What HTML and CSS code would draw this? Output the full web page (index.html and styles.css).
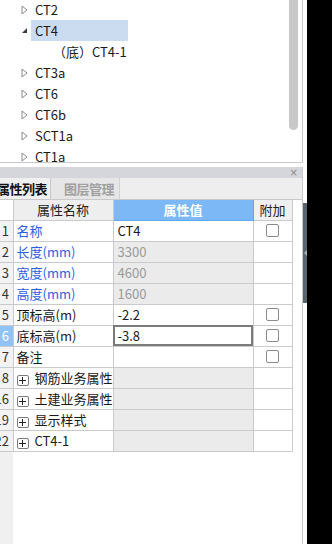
FILE: index.html
```html
<!DOCTYPE html>
<html lang="zh">
<head>
    <meta charset="UTF-8">
    <title>属性列表</title>
    <link rel="stylesheet" href="styles.css">
</head>
<body>
<div class="app">
    <div class="main">
        <div class="tree-panel">
            <div class="tree">
                <div class="node"><span class="twisty"><svg width="7" height="10" viewBox="0 0 7 10"><path d="M1 1 L6 5 L1 9 Z" fill="none" stroke="#8a8a8a" stroke-width="1"/></svg></span><span class="label">CT2</span></div>
                <div class="node selected"><span class="twisty"><svg width="7" height="10" viewBox="0 0 7 10"><path d="M6 2 L6 7 L1 7 Z" fill="#3c3c3c"/></svg></span><span class="label">CT4</span></div>
                <div class="node child"><span class="label">（底）CT4-1</span></div>
                <div class="node"><span class="twisty"><svg width="7" height="10" viewBox="0 0 7 10"><path d="M1 1 L6 5 L1 9 Z" fill="none" stroke="#8a8a8a" stroke-width="1"/></svg></span><span class="label">CT3a</span></div>
                <div class="node"><span class="twisty"><svg width="7" height="10" viewBox="0 0 7 10"><path d="M1 1 L6 5 L1 9 Z" fill="none" stroke="#8a8a8a" stroke-width="1"/></svg></span><span class="label">CT6</span></div>
                <div class="node"><span class="twisty"><svg width="7" height="10" viewBox="0 0 7 10"><path d="M1 1 L6 5 L1 9 Z" fill="none" stroke="#8a8a8a" stroke-width="1"/></svg></span><span class="label">CT6b</span></div>
                <div class="node"><span class="twisty"><svg width="7" height="10" viewBox="0 0 7 10"><path d="M1 1 L6 5 L1 9 Z" fill="none" stroke="#8a8a8a" stroke-width="1"/></svg></span><span class="label">SCT1a</span></div>
                <div class="node"><span class="twisty"><svg width="7" height="10" viewBox="0 0 7 10"><path d="M1 1 L6 5 L1 9 Z" fill="none" stroke="#8a8a8a" stroke-width="1"/></svg></span><span class="label">CT1a</span></div>
            </div>
            <div class="vscroll"><div class="thumb"></div></div>
        </div>

        <div class="props-panel">
            <div class="panel-title"><span class="close">×</span></div>
            <div class="tabs">
                <div class="tab active">属性列表</div>
                <div class="tab">图层管理</div>
            </div>
            <div class="grid-wrap">
                <table class="prop-table">
                    <colgroup>
                        <col class="c-num">
                        <col class="c-name">
                        <col class="c-value">
                        <col class="c-add">
                    </colgroup>
                    <tr class="head">
                        <th class="num"></th>
                        <th class="name-head">属性名称</th>
                        <th class="value-head">属性值</th>
                        <th class="add-head">附加</th>
                    </tr>
                    <tr>
                        <td class="num"><div class="num-in">1</div></td>
                        <td class="name blue">名称</td>
                        <td class="value">CT4</td>
                        <td class="add"><span class="check"></span></td>
                    </tr>
                    <tr>
                        <td class="num"><div class="num-in">2</div></td>
                        <td class="name blue">长度(mm)</td>
                        <td class="value readonly">3300</td>
                        <td class="add"></td>
                    </tr>
                    <tr>
                        <td class="num"><div class="num-in">3</div></td>
                        <td class="name blue">宽度(mm)</td>
                        <td class="value readonly">4600</td>
                        <td class="add"></td>
                    </tr>
                    <tr>
                        <td class="num"><div class="num-in">4</div></td>
                        <td class="name blue">高度(mm)</td>
                        <td class="value readonly">1600</td>
                        <td class="add"></td>
                    </tr>
                    <tr>
                        <td class="num"><div class="num-in">5</div></td>
                        <td class="name">顶标高(m)</td>
                        <td class="value">-2.2</td>
                        <td class="add"><span class="check"></span></td>
                    </tr>
                    <tr class="current">
                        <td class="num"><div class="num-in">6</div></td>
                        <td class="name">底标高(m)</td>
                        <td class="value editing">-3.8</td>
                        <td class="add"><span class="check"></span></td>
                    </tr>
                    <tr>
                        <td class="num"><div class="num-in">7</div></td>
                        <td class="name">备注</td>
                        <td class="value"></td>
                        <td class="add"><span class="check"></span></td>
                    </tr>
                    <tr class="group">
                        <td class="num"><div class="num-in">8</div></td>
                        <td class="name"><span class="plus"><svg width="7" height="7" viewBox="0 0 7 7"><path d="M3.5 0 V7 M0 3.5 H7" stroke="#222" stroke-width="1"/></svg></span>钢筋业务属性</td>
                        <td class="value readonly"></td>
                        <td class="add"></td>
                    </tr>
                    <tr class="group">
                        <td class="num"><div class="num-in">16</div></td>
                        <td class="name"><span class="plus"><svg width="7" height="7" viewBox="0 0 7 7"><path d="M3.5 0 V7 M0 3.5 H7" stroke="#222" stroke-width="1"/></svg></span>土建业务属性</td>
                        <td class="value readonly"></td>
                        <td class="add"></td>
                    </tr>
                    <tr class="group">
                        <td class="num"><div class="num-in">19</div></td>
                        <td class="name"><span class="plus"><svg width="7" height="7" viewBox="0 0 7 7"><path d="M3.5 0 V7 M0 3.5 H7" stroke="#222" stroke-width="1"/></svg></span>显示样式</td>
                        <td class="value readonly"></td>
                        <td class="add"></td>
                    </tr>
                    <tr class="group">
                        <td class="num"><div class="num-in">22</div></td>
                        <td class="name"><span class="plus"><svg width="7" height="7" viewBox="0 0 7 7"><path d="M3.5 0 V7 M0 3.5 H7" stroke="#222" stroke-width="1"/></svg></span>CT4-1</td>
                        <td class="value readonly"></td>
                        <td class="add"></td>
                    </tr>
                </table>
            </div>
        </div>
    </div>
    <div class="gutter">
        <div class="handle"><span class="handle-arrow"></span></div>
    </div>
    <div class="blackout"></div>
</div>
</body>
</html>
```

FILE: styles.css
```css
* {
    box-sizing: border-box;
}

body {
    margin: 0;
    background-color: #ffffff;
    font-family: "Noto Sans CJK SC", "Microsoft YaHei", sans-serif;
    font-size: 12px;
    color: #1a1a1a;
}

.app {
    display: flex;
    width: 332px;
    height: 544px;
    overflow: hidden;
}

.main {
    width: 303px;
    display: flex;
    flex-direction: column;
    gap: 4px;
}

.gutter {
    width: 4px;
    padding-top: 203px;
    background-color: #ffffff;
}

.handle {
    height: 100px;
    background-color: #5b636e;
    display: flex;
    align-items: center;
    justify-content: center;
}

.handle-arrow {
    width: 0;
    height: 0;
    border-top: 3px solid transparent;
    border-bottom: 3px solid transparent;
    border-right: 3px solid #a9aeb5;
}

.blackout {
    flex: 1;
    background-color: #000000;
}

/* tree */

.tree-panel {
    height: 163px;
    display: flex;
    border-right: 1px solid #c9c9cc;
    border-bottom: 1px solid #c9c9cc;
    overflow: hidden;
}

.tree {
    flex: 1;
    margin-top: -1px;
    font-size: 13px;
}

.node {
    height: 21px;
    display: flex;
    align-items: center;
    padding-left: 21px;
}

.twisty {
    width: 10px;
    display: flex;
    align-items: center;
}

.label {
    height: 21px;
    line-height: 21px;
    padding: 0 4px;
    white-space: nowrap;
}

.node.selected .label {
    width: 97px;
    background-color: #cbdcf1;
}

.node.child {
    padding-left: 31px;
}

.node.child .label {
    padding-left: 22px;
}

.vscroll {
    width: 13px;
    padding-right: 4px;
}

.thumb {
    height: 130px;
    background-color: #c8c8c8;
    border-radius: 0 0 5px 5px;
}

/* property panel */

.props-panel {
    flex: 1;
    display: flex;
    flex-direction: column;
    border-right: 1px solid #c9c9cc;
}

.panel-title {
    height: 11px;
    background-color: #d5d6db;
    display: flex;
    justify-content: flex-end;
    align-items: center;
    padding-right: 4px;
}

.close {
    font-family: "DejaVu Sans", sans-serif;
    font-size: 10px;
    line-height: 10px;
    color: #8a8a8a;
}

.tabs {
    height: 22px;
    display: flex;
    background-color: #eeeeee;
    border-bottom: 1px solid #c9c9cc;
    font-size: 13px;
    letter-spacing: -0.5px;
    font-weight: bold;
}

.tab {
    height: 21px;
    line-height: 21px;
    padding: 0 5px 0 13px;
    color: #a0a0a0;
    background-color: #e6e6e6;
    border-right: 1px solid #d2d2d2;
}

.tab.active {
    margin-left: -3px;
    padding: 0 3px 0 0;
    color: #111111;
    background-color: #f0f0f0;
    border-right: 1px solid #c9c9cc;
}

.grid-wrap {
    flex: 1;
    background: linear-gradient(to right, #f0f0f0 13px, #ffffff 13px);
}

.prop-table {
    width: 292px;
    table-layout: fixed;
    border-collapse: collapse;
    font-size: 13px;
}

.c-num { width: 13px; }
.c-name { width: 100px; }
.c-value { width: 140px; }
.c-add { width: 39px; }

.prop-table th,
.prop-table td {
    height: 21px;
    padding: 0;
    border: 1px solid #cacace;
    white-space: nowrap;
    overflow: hidden;
    line-height: 19px;
    background-color: #ffffff;
}

.prop-table th {
    height: 20px;
    font-weight: normal;
    border-top: none;
}

.prop-table .num {
    border-left: none;
    background-color: #f3f3f3;
    color: #333333;
}

.prop-table th.num {
    background-color: #ffffff;
}

.num-in {
    width: 12px;
    display: flex;
    justify-content: flex-end;
    padding-right: 3px;
    overflow: hidden;
}

.current .num {
    background-color: #8fc3f5;
    color: #ffffff;
}

.name-head {
    background-color: #eeeeee !important;
    color: #222222;
}

.value-head {
    background-color: #7cb8f6 !important;
    border-color: #62a6ee !important;
    color: #ffffff;
    font-weight: bold !important;
}

.add-head {
    background-color: #f0f0f0 !important;
    color: #222222;
}

.name {
    padding-left: 3px !important;
}

.name.blue {
    color: #2c5fe0;
}

.value {
    padding-left: 4px !important;
}

.value.readonly {
    background-color: #ebebeb !important;
    color: #9a9a9a;
}

.value.editing {
    outline: 2px solid #7b7b7b;
    outline-offset: -2px;
}

.add {
    text-align: center;
}

.check {
    display: inline-block;
    width: 13px;
    height: 13px;
    margin-top: 3px;
    vertical-align: top;
    border: 1px solid #8a8a8a;
    border-radius: 2px;
    background-color: #ffffff;
}

.plus {
    display: inline-flex;
    align-items: center;
    justify-content: center;
    width: 12px;
    height: 11px;
    margin: 0 6px 0 0;
    vertical-align: -1px;
    border: 1px solid #7a7a7a;
    border-radius: 2px;
    background-color: #ffffff;
}
```
